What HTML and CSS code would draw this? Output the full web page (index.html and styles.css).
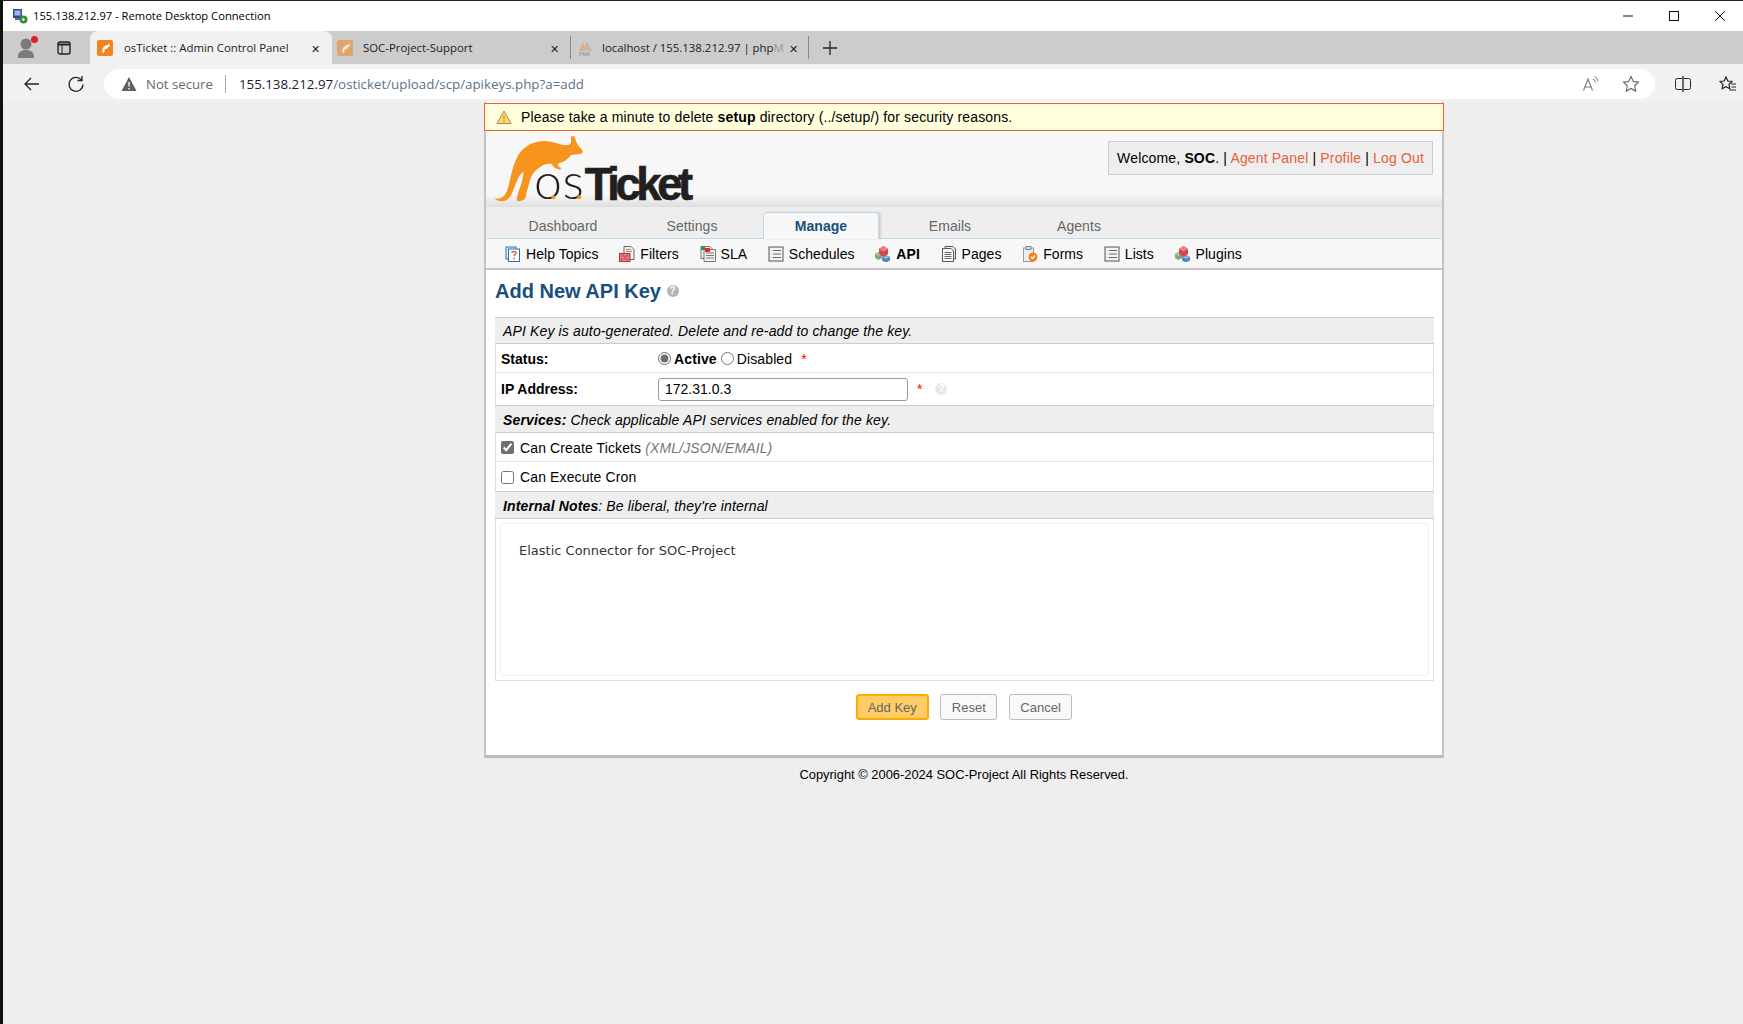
FILE: index.html
```html
<!DOCTYPE html>
<html>
<head>
    <title>osTicket :: Admin Control Panel</title>
    <link rel="stylesheet" href="styles.css">
</head>
<body>
<svg class="defs" width="0" height="0">
    <symbol id="i-list" viewBox="0 0 16 16">
        <rect x="1" y="1" width="14" height="14" fill="#f4f4f4" stroke="#555"/>
        <path d="M5 4.500h8M5 8h8M5 11.500h8" stroke="#666"/>
        <path d="M2.500 4.500h1M2.500 8h1M2.500 11.500h1" stroke="#aaa"/>
    </symbol>
    <symbol id="i-cubes" viewBox="0 0 16 16">
        <path d="M0 8l3.500-2L7 8v4l-3.500 2L0 12z" fill="#7fa877"/>
        <path d="M0 8l3.500 2L7 8l-3.500-2z" fill="#a5c49e"/>
        <path d="M7 11l4-2 4 2v3.500L11 16.500 7 14.500z" fill="#4f86c0"/>
        <path d="M7 11l4 2 4-2-4-2z" fill="#8ab1da"/>
        <path d="M4 3l4.500-3L13 3v5l-4.500 3L4 8z" fill="#d9434c"/>
        <path d="M4 3l4.500 2.500L13 3 8.500 0z" fill="#f08088"/>
    </symbol>
    <symbol id="i-fav" viewBox="0 0 16 16">
        <rect width="16" height="16" rx="2" fill="#f58220"/>
        <path d="M3 13c2 0 2-3 3-5s3-3 5-3l1-2 1 3-2 1-1 2-2 0-1 4-1 0 0-3-1 2z" fill="#fff"/>
    </symbol>
</svg>

<header class="titlebar">
    <svg class="rdp-icon" viewBox="0 0 16 16" width="16" height="16">
        <rect x="1" y="1" width="9" height="9" fill="#2b4a9b"/>
        <rect x="2.500" y="2.500" width="6" height="5" fill="#9db8e8"/>
        <rect x="3" y="10" width="7" height="2" fill="#667"/>
        <circle cx="11.500" cy="11.500" r="4" fill="#3a8f3a"/>
        <path d="M10 11.500h3M11.500 10v3" stroke="#fff"/>
    </svg>
    <span class="title-text">155.138.212.97 - Remote Desktop Connection</span>
    <div class="win-buttons">
        <svg viewBox="0 0 12 12" width="12" height="12"><path d="M1 6h10" stroke="#111"/></svg>
        <svg viewBox="0 0 12 12" width="12" height="12"><rect x="1.500" y="1.500" width="9" height="9" fill="none" stroke="#111"/></svg>
        <svg viewBox="0 0 12 12" width="12" height="12"><path d="M1 1l10 10M11 1L1 11" stroke="#111"/></svg>
    </div>
</header>

<nav class="tabstrip">
    <div class="tab-tools">
        <div class="avatar">
            <svg viewBox="0 0 20 24" width="20" height="24">
                <circle cx="10" cy="8" r="5.500" fill="#7b7b7b"/>
                <path d="M2 21c0-5 3-7 8-7s8 2 8 7v1H2z" fill="#7b7b7b"/>
            </svg>
            <span class="avatar-dot"></span>
        </div>
        <svg class="tab-actions" viewBox="0 0 14 14" width="14" height="14">
            <rect x="1" y="1" width="12" height="12" rx="2" fill="none" stroke="#222" stroke-width="1.400"/>
            <path d="M1 3.500h12" stroke="#222" stroke-width="2"/><path d="M5 4v9" stroke="#222"/>
        </svg>
    </div>
    <div class="tab active">
        <svg width="16" height="16"><use href="#i-fav"/></svg>
        <span class="tab-title">osTicket :: Admin Control Panel</span>
        <span class="tab-close">✕</span>
    </div>
    <div class="tab second">
        <svg class="dim" width="16" height="16"><use href="#i-fav"/></svg>
        <span class="tab-title">SOC-Project-Support</span>
        <span class="tab-close">✕</span>
    </div>
    <div class="tab third">
        <svg class="dim" viewBox="0 0 16 16" width="16" height="16">
            <path d="M1 11l4-9 2 4 2-5 5 10z" fill="#d9a066"/>
            <text x="1" y="15.500" class="pma">PMA</text>
        </svg>
        <span class="tab-title">localhost / 155.138.212.97 | php<span class="fade">M</span></span>
        <span class="tab-close">✕</span>
    </div>
    <svg class="new-tab" viewBox="0 0 14 14" width="14" height="14"><path d="M7 0v14M0 7h14" stroke="#222" stroke-width="1.300"/></svg>
</nav>

<div class="addressrow">
    <svg class="nav-btn" viewBox="0 0 18 18" width="18" height="18"><path d="M16 9H2M8 3L2 9l6 6" fill="none" stroke="#222" stroke-width="1.300"/></svg>
    <svg class="nav-btn reload" viewBox="0 0 18 18" width="18" height="18"><path d="M14.500 5A7 7 0 1 0 16 9.500" fill="none" stroke="#222" stroke-width="1.300"/><path d="M15 1v4.500h-4.500" fill="none" stroke="#222" stroke-width="1.300"/></svg>
    <div class="omnibox">
        <svg class="warn" viewBox="0 0 16 16" width="16" height="16"><path d="M8 1l7.500 14H.5z" fill="#5f5f5f"/><path d="M8 6v4.500M8 12v1.500" stroke="#fff" stroke-width="1.300"/></svg>
        <span class="not-secure">Not secure</span>
        <span class="url"><b>155.138.212.97</b>/osticket/upload/scp/apikeys.php?a=add</span>
        <svg class="read-aloud" viewBox="0 0 18 18" width="18" height="18"><path d="M1.500 15.500L6 4l4.500 11.500M3 12h6" fill="none" stroke="#777" stroke-width="1.100"/><path d="M11 4a4 4 0 0 1 2.500 3.500M12.500 1.500a6 6 0 0 1 3.500 5" fill="none" stroke="#777"/></svg>
        <svg class="star" viewBox="0 0 18 18" width="18" height="18"><path d="M9 1.500l2.300 4.900 5.200.7-3.800 3.700 1 5.300L9 13.500l-4.700 2.600 1-5.300L1.500 7.100l5.200-.7z" fill="none" stroke="#666" stroke-width="1.100"/></svg>
    </div>
    <svg class="split" viewBox="0 0 16 16" width="16" height="16"><path d="M7 2.500H2.500a2 2 0 0 0-2 2v7a2 2 0 0 0 2 2H7M9 2.500h4.500a2 2 0 0 1 2 2v7a2 2 0 0 1-2 2H9" fill="none" stroke="#222"/><path d="M8 0v16" stroke="#222" stroke-width="1.300"/></svg>
    <svg class="favs" viewBox="0 0 18 18" width="18" height="18"><path d="M7 2l1.800 4 4.200.5-3 2.900.8 4.300L7 11.600l-3.800 2.100.8-4.300-3-2.900L5.200 6z" fill="none" stroke="#222" stroke-width="1.200"/><path d="M12 9h5M12.500 12h4.500M10.500 15h6.500" stroke="#222"/></svg>
</div>

<div class="page">
    <div class="notice">
        <svg viewBox="0 0 16 16" width="16" height="16"><path d="M8 2l7 12.500H1z" fill="#ffd866" stroke="#9a8a60"/><path d="M8 6.500v4M8 11.500v1.500" stroke="#8a7a50"/></svg>
        <span>Please take a minute to delete <b>setup</b> directory (../setup/) for security reasons.</span>
    </div>

    <div class="header">
        <svg class="logo" viewBox="0 0 780 240" width="260" height="80">
            <path d="M14 205C30 210 45 200 52 180C62 150 65 110 85 75C100 50 130 33 165 33C190 33 210 47 235 45L243 40L243 22C245 16 252 17 254 22L260 38C264 48 272 54 278 62C280 68 274 72 268 72L243 75C236 84 228 92 218 96L206 100C200 104 204 110 214 114L210 119C198 116 188 110 186 102C176 100 165 102 155 108C140 118 128 128 122 145C116 165 110 185 106 205C100 212 88 216 82 212C78 208 82 198 84 190C90 170 100 150 100 125C85 135 78 160 68 185C60 205 50 212 36 214C26 214 18 210 14 205Z" fill="#f7941e"/>
            <text x="132" y="208" class="logo-os">os</text>
            <circle cx="190" cy="202" r="6" fill="#f7941e"/>
            <circle cx="268" cy="202" r="6" fill="#f7941e"/>
            <text x="284" y="209" class="logo-ticket">Ticket</text>
        </svg>
        <div class="userbox">
            <span>Welcome, <b>SOC</b>. | <a>Agent Panel</a> | <a>Profile</a> | <a>Log Out</a></span>
        </div>
    </div>

    <ul class="nav">
        <li>Dashboard</li>
        <li>Settings</li>
        <li class="current">Manage</li>
        <li>Emails</li>
        <li>Agents</li>
    </ul>

    <ul class="subnav">
        <li>
            <svg viewBox="0 0 16 16" width="16" height="16"><rect x="1" y="1" width="10" height="12" fill="#e6f0f8" stroke="#1b75bb"/><rect x="3.500" y="3" width="11" height="12.500" fill="#fff" stroke="#1b75bb"/><path d="M7 7c0-2 4-2 4 0 0 1.500-2 1.500-2 3.300M9 11.500v2" fill="none" stroke="#e8642c" stroke-width="1.500"/></svg>
            Help Topics
        </li>
        <li>
            <svg viewBox="0 0 16 16" width="16" height="16"><path d="M5 .5h7l3 3v10H5z" fill="#f2f2f2" stroke="#666"/><path d="M7 3.500h5M7 5.500h6" stroke="#888"/><rect x=".5" y="7.500" width="10.500" height="8" fill="#f08a90" stroke="#b8333a"/><path d="M1 10h10M1 13h10M4 8v2M8 8v2M6 10v3M3 13v2M8 13v2" stroke="#b8333a" stroke-width=".7"/></svg>
            Filters
        </li>
        <li>
            <svg viewBox="0 0 16 16" width="16" height="16"><path d="M1 .5h9l2 2v10H1z" fill="#eee" stroke="#777"/><path d="M4 3.500h11.500V15.500H4z" fill="#f2f2f2" stroke="#777"/><path d="M6 7h8M6 9.500h8M6 12h8" stroke="#777"/><rect x="1" y="0" width="4" height="4" fill="#2a9a4a"/><rect x="5" y="2" width="5" height="4" fill="#e02a2a"/></svg>
            SLA
        </li>
        <li><svg width="16" height="16"><use href="#i-list"/></svg>Schedules</li>
        <li class="current"><svg width="16" height="16"><use href="#i-cubes"/></svg>API</li>
        <li>
            <svg viewBox="0 0 16 16" width="16" height="16"><path d="M4 .5h8l2.500 2.500v10H4z" fill="#eee" stroke="#555"/><path d="M1.500 2.500h8.500l2.500 2.500v10.500h-11z" fill="#fafafa" stroke="#555"/><path d="M3.500 6.500h7M3.500 8.500h7M3.500 10.500h7M3.500 12.500h7" stroke="#666"/></svg>
            Pages
        </li>
        <li>
            <svg viewBox="0 0 16 16" width="16" height="16"><rect x="1.500" y="2" width="10" height="13.500" fill="#eee" stroke="#999"/><rect x="4" y=".5" width="5" height="3" fill="#ddd" stroke="#888"/><circle cx="11" cy="11" r="4.500" fill="#f58220"/><path d="M9 11l1.500 1.500L13 9.500" fill="none" stroke="#fff" stroke-width="1.200"/></svg>
            Forms
        </li>
        <li><svg width="16" height="16"><use href="#i-list"/></svg>Lists</li>
        <li><svg width="16" height="16"><use href="#i-cubes"/></svg>Plugins</li>
    </ul>

    <div class="content">
        <h2>Add New API Key <span class="help big">?</span></h2>

        <form class="form-table">
            <div class="bar first"><em>API Key is auto-generated. Delete and re-add to change the key.</em></div>
            <div class="row status">
                <label class="field">Status:</label>
                <div class="radios">
                    <input type="radio" name="status" checked><b>Active</b>
                    <input type="radio" name="status"><span>Disabled</span>
                    <span class="req">*</span>
                </div>
            </div>
            <div class="row ip">
                <label class="field">IP Address:</label>
                <input type="text" class="ip-input" value="172.31.0.3">
                <span class="req">*</span>
                <span class="help">?</span>
            </div>
            <div class="bar"><em><b>Services:</b> Check applicable API services enabled for the key.</em></div>
            <div class="row check">
                <input type="checkbox" checked>
                <span>Can Create Tickets <em class="muted">(XML/JSON/EMAIL)</em></span>
            </div>
            <div class="row check last">
                <input type="checkbox">
                <span>Can Execute Cron</span>
            </div>
            <div class="bar"><em><b>Internal Notes</b>: Be liberal, they're internal</em></div>
            <div class="notes-wrap">
                <div class="notes">Elastic Connector for SOC-Project</div>
            </div>
        </form>

        <div class="buttons">
            <button type="button" class="primary">Add Key</button>
            <button type="button">Reset</button>
            <button type="button">Cancel</button>
        </div>
    </div>
</div>

<div class="copyright">Copyright © 2006-2024 SOC-Project All Rights Reserved.</div>
</body>
</html>
```

FILE: styles.css
```css
* {
    box-sizing: border-box;
}

html, body {
    height: 100%;
}

body {
    margin: 0;
    background: #eeeeee;
    border-left: 3px solid #111;
    border-top: 1px solid #222;
    font-family: "Liberation Sans", Arial, sans-serif;
    font-size: 14px;
    color: #000;
    overflow: hidden;
}

.defs {
    position: absolute;
}

/* window + browser chrome */
.titlebar {
    height: 30px;
    background: #fff;
    display: flex;
    align-items: center;
    padding-left: 9px;
    font-family: "Open Sans", sans-serif;
    font-size: 11.200px;
}

.title-text {
    margin: -2px 0 0 5px;
}

.win-buttons {
    margin-left: auto;
    display: flex;
    gap: 34px;
    padding-right: 17px;
}

.tabstrip {
    height: 33px;
    background: #cccccc;
    display: flex;
    align-items: stretch;
    font-family: "Open Sans", sans-serif;
    font-size: 11.400px;
    color: #222;
}

.tab-tools {
    width: 87px;
    display: flex;
    align-items: center;
    padding-left: 13px;
}

.avatar {
    position: relative;
    width: 20px;
    height: 24px;
}

.avatar-dot {
    position: absolute;
    top: 0;
    left: 15px;
    width: 7px;
    height: 7px;
    border-radius: 50%;
    background: #e0202a;
}

.tab-actions {
    margin-left: 21px;
}

.tab {
    display: flex;
    align-items: center;
    position: relative;
}

.tab.active {
    width: 242px;
    padding-left: 7px;
    background: #f1f1f1;
    border-radius: 8px 8px 0 0;
}

.tab.second {
    width: 238px;
    padding-left: 5px;
}

.tab.third {
    width: 239px;
    padding-left: 7px;
    border-left: 1px solid #888;
    border-right: 1px solid #888;
    margin: 5px 0;
}

.tab-title {
    margin-left: 11px;
    white-space: nowrap;
}

.tab.second .tab-title {
    margin-left: 10px;
}

.tab.third .tab-title {
    margin-left: 8px;
}

.fade {
    color: #999;
}

.tab-close {
    position: absolute;
    top: 50%;
    transform: translateY(-50%);
    font-size: 11px;
    color: #222;
}

.tab.active .tab-close {
    left: 221px;
}

.tab.second .tab-close {
    left: 218px;
}

.tab.third .tab-close {
    left: 218px;
}

.dim {
    opacity: 0.55;
}

.pma {
    font-size: 5px;
    font-weight: bold;
    fill: #777;
}

.new-tab {
    align-self: center;
    margin-left: 14px;
}

.addressrow {
    height: 38px;
    padding-top: 2px;
    background: #f1f1f1;
    display: flex;
    align-items: center;
    font-family: "Open Sans", sans-serif;
    font-size: 13.200px;
}

.nav-btn {
    margin-left: 20px;
}

.nav-btn.reload {
    margin-left: 26px;
}

.omnibox {
    width: 1551px;
    height: 30px;
    margin-left: 19px;
    padding-left: 17px;
    background: #fff;
    border-radius: 15px;
    display: flex;
    align-items: center;
    position: relative;
}

.not-secure {
    margin-left: 9px;
    color: #666;
    padding-right: 12px;
    border-right: 1px solid #aaa;
}

.url {
    margin-left: 13px;
    font-size: 13.330px;
    color: #5d7186;
}

.url b {
    font-weight: 400;
    color: #1a2230;
}

.read-aloud {
    margin-left: auto;
}

.star {
    margin: 0 15px 0 22px;
}

.split {
    margin-left: 20px;
}

.favs {
    margin-left: 28px;
}

/* osTicket page */
.page {
    width: 960px;
    margin-left: 481px;
    padding-top: 1px;
    background: #fff;
    border-left: 2px solid #c4c4c4;
    border-right: 2px solid #c4c4c4;
    border-bottom: 3px solid #bbbbbb;
}

.notice {
    height: 28px;
    margin: 0 -2px;
    padding-left: 11px;
    display: flex;
    align-items: center;
    gap: 9px;
    background: #ffffdd;
    border: 1px solid #f26522;
    letter-spacing: 0.14px;
}

.header {
    height: 76px;
    background: linear-gradient(#f7f7f7 84%, #dedede);
    display: flex;
    justify-content: space-between;
    padding-left: 4px;
}

.logo {
    margin-top: -1px;
}

.logo-os {
    font-family: "Lato", sans-serif;
    font-weight: 300;
    font-size: 150px;
    letter-spacing: 2px;
    fill: #231f20;
}

.logo-ticket {
    font-family: "Liberation Sans", sans-serif;
    font-weight: 700;
    font-size: 136px;
    letter-spacing: -13px;
    stroke: #231f20;
    stroke-width: 2px;
    fill: #231f20;
}

.userbox {
    height: 34px;
    margin: 10px 9px 0 0;
    padding: 0 8px;
    display: flex;
    align-items: center;
    white-space: nowrap;
    letter-spacing: 0.16px;
    background: #eeeeee;
    border: 1px solid #cccccc;
}

.userbox a {
    color: #e8603c;
}

.nav {
    list-style: none;
    margin: 0;
    height: 32px;
    padding: 5px 0 0 19px;
    display: flex;
    gap: 13px;
    letter-spacing: 0.05px;
    background: #eeeeee;
    border-bottom: 1px solid #bfd9ec;
}

.nav li {
    width: 116px;
    text-align: center;
    padding-top: 6px;
    color: #666;
}

.nav li.current {
    height: 27px;
    background: #f7f7f7;
    border: 1px solid #bfd9ec;
    border-bottom: 0;
    border-radius: 4px 4px 0 0;
    box-shadow: 2px 0 2px rgba(0, 0, 0, 0.12);
    padding-top: 5px;
    font-weight: bold;
    color: #184e81;
}

.subnav {
    list-style: none;
    margin: 0;
    height: 31px;
    padding: 0 0 0 19px;
    display: flex;
    gap: 20.700px;
    align-items: center;
    letter-spacing: 0.05px;
    background: #f7f7f7;
    border-bottom: 2px solid #c4c4c4;
}

.subnav li {
    display: flex;
    align-items: center;
    gap: 5px;
}

.subnav li.current {
    font-weight: bold;
}

.content {
    padding: 0 8px 0 9px;
    height: 485px;
}

h2 {
    margin: 0;
    height: 47px;
    padding-top: 9px;
    font-size: 20px;
    line-height: 24px;
    color: #184e81;
}

.help {
    display: inline-block;
    width: 12px;
    height: 12px;
    border-radius: 50%;
    background: #e8e8e8;
    color: #fff;
    font-size: 10px;
    line-height: 12px;
    font-weight: bold;
    text-align: center;
    vertical-align: middle;
}

.help.big {
    background: #b5b5b5;
    margin-top: -3px;
}

.form-table {
    border-left: 1px solid #dddddd;
    border-right: 1px solid #dddddd;
    border-bottom: 1px solid #dddddd;
}

.bar {
    height: 28px;
    padding: 1px 8px 0;
    display: flex;
    align-items: center;
    background: #eeeeee;
    border-top: 1px solid #cccccc;
    border-bottom: 1px solid #cccccc;
    margin: 0 -1px;
    letter-spacing: 0.14px;
}

.bar.first {
    height: 27px;
}

.bar em {
    white-space: pre;
}

.row {
    display: flex;
    align-items: center;
    padding-left: 5px;
    border-bottom: 1px solid #e4e4e4;
}

.row.status {
    height: 29px;
    padding-top: 1px;
}

.row.ip {
    height: 32px;
    border-bottom: 0;
}

.row.check {
    height: 29px;
    padding-top: 1px;
    gap: 6px;
    letter-spacing: 0.12px;
}

.row.check.last {
    border-bottom: 0;
}

.field {
    width: 157px;
    font-weight: bold;
}

.radios {
    display: flex;
    align-items: center;
    letter-spacing: 0.12px;
}

.radios input {
    margin: 0 3px 0 0;
    width: 13px;
    height: 13px;
    accent-color: #6f6f6f;
}

.radios b {
    margin-right: 4px;
}

.req {
    color: #ff0000;
    margin-left: 9px;
}

.ip-input {
    width: 250px;
    height: 23px;
    padding: 0 6px;
    border: 1px solid #9a9a9a;
    border-radius: 3px;
    font: 14px "Liberation Sans", Arial, sans-serif;
    color: #000;
}

.row.ip .help {
    margin-left: 13px;
}

.row.check input {
    margin: 0;
    width: 13px;
    height: 13px;
    accent-color: #6f6f6f;
}

.muted {
    color: #777;
}

.notes-wrap {
    height: 161px;
    padding: 4px;
}

.notes {
    height: 100%;
    padding: 19px 18px;
    border: 1px solid #eeeeee;
    border-radius: 3px;
    font-family: "DejaVu Sans", sans-serif;
    font-size: 13px;
    color: #333;
}

.buttons {
    display: flex;
    justify-content: center;
    gap: 11.500px;
    margin-top: 13px;
    padding-right: 1px;
}

.buttons button {
    height: 26px;
    padding: 0 10.500px;
    background: #f9f9f9;
    border: 1px solid #bbbbbb;
    border-radius: 3px;
    font: 13px "Liberation Sans", Arial, sans-serif;
    color: #666;
}

.buttons .primary {
    padding: 0 10px;
    background: #ffcc66;
    border: 2px solid #ffaa00;
    color: #666;
}

.copyright {
    width: 960px;
    margin-left: 481px;
    padding-top: 9px;
    text-align: center;
    font-size: 12.900px;
}
```
